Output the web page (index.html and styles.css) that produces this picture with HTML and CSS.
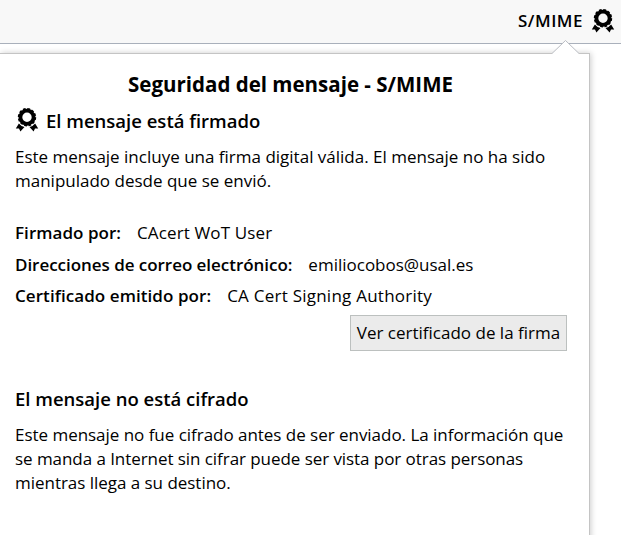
FILE: index.html
```
<!DOCTYPE html>
<html lang="es">
<head>
<meta charset="utf-8">
<title>Seguridad del mensaje</title>
<link rel="stylesheet" href="styles.css">
</head>
<body>
<svg class="defs" width="0" height="0">
  <symbol id="seal" viewBox="0 0 24 24">
    <path d="M3.9 15.4 L.8 20.4 L4 20.5 L5.4 23.4 L9.5 19 Q6 18.2 3.9 15.4Z M20.1 15.4 L23.2 20.4 L20 20.5 L18.6 23.4 L14.5 19 Q18 18.2 20.1 15.4Z"/>
    <circle cx="12" cy="9.2" r="6.6" fill="none" stroke="currentColor" stroke-width="3.8"/>
    <circle cx="12" cy="9.2" r="8.3" fill="none" stroke="currentColor" stroke-width="1.8" stroke-dasharray="2.75 1.596"/>
  </symbol>
</svg>
<header class="toolbar">
  <span class="toolbar-label">S/MIME</span>
  <svg class="seal"><use href="#seal"/></svg>
</header>
<main class="panel">
  <svg class="arrow" viewBox="0 0 28 15"><path class="arrow-fill" d="M0 15V13.5L13.5 .5L27 13.5V15Z"/><path class="arrow-line" d="M0 13.5L13.5 .5L27 13.5"/></svg>
  <h1>Seguridad del mensaje - S/MIME</h1>
  <section>
    <h2 class="signed"><svg class="seal"><use href="#seal"/></svg><span>El mensaje está firmado</span></h2>
    <p>Este mensaje incluye una firma digital válida. El mensaje no ha sido<br>manipulado desde que se envió.</p>
    <dl>
      <div><dt>Firmado por:</dt><dd class="signer">CAcert WoT User</dd></div>
      <div><dt class="address">Direcciones de correo electrónico:</dt><dd>emiliocobos@usal.es</dd></div>
      <div><dt class="issued">Certificado emitido por:</dt><dd class="issuer">CA Cert Signing Authority</dd></div>
    </dl>
    <div class="actions"><button>Ver certificado de la firma</button></div>
  </section>
  <section>
    <h2 class="plain">El mensaje no está cifrado</h2>
    <p class="tight">Este mensaje no fue cifrado antes de ser enviado. La información que<br><span class="tighter">se manda a Internet sin cifrar puede ser vista por otras personas</span><br>mientras llega a su destino.</p>
  </section>
</main>
</body>
</html>
```
FILE: styles.css
```
* { box-sizing: border-box; }
body {
  margin: 0;
  height: 535px;
  overflow: hidden;
  background: #fff;
  color: #000;
  font: 17px/24px "Open Sans", "Noto Sans", sans-serif;
}
.defs { position: absolute; }
.toolbar {
  display: flex;
  justify-content: flex-end;
  align-items: center;
  gap: 8px;
  height: 44px;
  padding: 0 6px 1px 0;
  background: #f8f8f8;
  border-bottom: 1px solid #a9b0bb;
}
.toolbar-label { font-weight: 600; letter-spacing: .5px; }
.seal { width: 24px; height: 24px; flex: none; fill: currentColor; }
.panel {
  position: relative;
  width: 590px;
  height: 500px;
  margin-top: 9px;
  padding: 17px 22px 0 15px;
  background: #fff;
  border: 1px solid #c4c4c4;
  border-left: 0;
  box-shadow: 1px 0 6px rgba(0, 0, 0, .2);
}
.arrow { position: absolute; left: 552px; top: -14px; width: 28px; height: 15px; }
.arrow-fill { fill: #fff; }
.arrow-line { fill: none; stroke: #b9bcc2; }
h1, h2, p, dl, dd { margin: 0; }
h1 { font-size: 20.5px; line-height: 26px; text-align: center; padding-right: 1px; }
h2 { font-size: 18.5px; line-height: 24px; font-weight: 600; }
.signed { display: flex; gap: 7px; margin-top: 12px; }
.signed .seal { margin-top: -1px; }
p { margin-top: 12px; white-space: nowrap; }
dl { margin-top: 28px; }
dl > div { display: flex; gap: 16px; height: 31.5px; }
dt { font-weight: 600; letter-spacing: .04px; }
.address { letter-spacing: -.04px; }
.issued { letter-spacing: .07px; }
.signer { letter-spacing: .13px; }
.issuer { letter-spacing: .24px; }
.actions { display: flex; justify-content: flex-end; }
button {
  width: 217px;
  height: 36px;
  margin-top: -1px;
  padding: 1px 0 0;
  font: inherit;
  color: inherit;
  background: #ebebeb;
  border: 1px solid #bcc0bf;
}
.plain { margin-top: 36px; }
.tight { letter-spacing: -.03px; }
.tighter { letter-spacing: -.06px; }
```
